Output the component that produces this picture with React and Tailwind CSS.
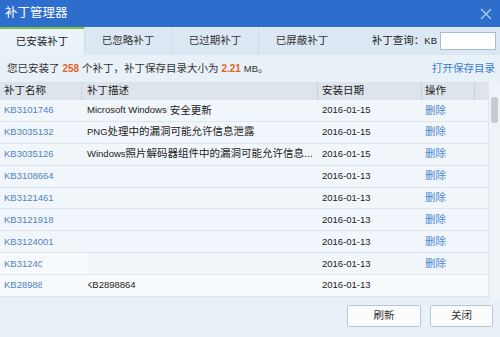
import React from "react";

const cjk = { fontFamily: '"Liberation Sans", "Noto Sans CJK SC", sans-serif' };

const rows = [
  { id: "KB3101746", desc: [["en", "Microsoft Windows"], ["zh", "安全更新", true]], date: "2016-01-15" },
  { id: "KB3035132", desc: [["en", "PNG"], ["zh", "处理中的漏洞可能允许信息泄露"]], date: "2016-01-15" },
  { id: "KB3035126", desc: [["en", "Windows"], ["zh", "照片解码器组件中的漏洞可能允许信息..."]], date: "2016-01-15" },
  { id: "KB3108664", desc: [], date: "2016-01-13" },
  { id: "KB3121461", desc: [], date: "2016-01-13" },
  { id: "KB3121918", desc: [], date: "2016-01-13" },
  { id: "KB3124001", desc: [], date: "2016-01-13" },
  { id: "KB3124001", desc: [], date: "2016-01-13", clip: true },
  { id: "KB2898864", desc: [["en", "KB2898864"]], date: "2016-01-13", clip: true, last: true },
];

const Desc = ({ parts }) =>
  parts.map(([lang, text, gap], i) => (
    <span key={i} className={`${lang === "en" ? "text-[9.5px]" : "text-[10.5px]"} ${gap ? "ml-[3px]" : ""}`}>
      {text}
    </span>
  ));

const App = () => {
  return (
    <div className="w-[500px] h-[337px] bg-[#e8f1f8] flex flex-col overflow-hidden text-[#222]" style={cjk}>
      {/* title bar */}
      <div className="h-[27px] bg-[#2d6dcc] flex items-center justify-between px-[5px] shrink-0">
        <span className="text-white text-[12.5px]">补丁管理器</span>
        <svg width="12" height="12" viewBox="0 0 12 12" className="mr-[3px]">
          <path d="M1 1L11 11M11 1L1 11" stroke="#b9d2f2" strokeWidth="1.2" />
        </svg>
      </div>

      {/* tabs */}
      <div className="h-[28px] bg-[#dbe7f3] flex items-stretch shrink-0">
        <div className="w-[84px] bg-[#eaf3fa] border-t-2 border-[#7cc242] flex items-center justify-center text-[10.5px]">
          已安装补丁
        </div>
        {["已忽略补丁", "已过期补丁", "已屏蔽补丁"].map((t) => (
          <div key={t} className="w-[87px] border-l border-[#cfdbe7] flex items-center justify-center text-[10.5px] text-[#333]">
            {t}
          </div>
        ))}
        <div className="flex-1 flex items-center justify-end pr-[4px] gap-[2px]">
          <span className="text-[10.5px]">补丁查询：</span>
          <span className="text-[9.5px] -ml-[2px]">KB</span>
          <div className="w-[56px] h-[18px] bg-white border border-[#a9bdd1] ml-[1px]" />
        </div>
      </div>

      {/* info line */}
      <div className="h-[27px] flex items-center justify-between px-[7px] shrink-0">
        <div className="text-[10.5px] text-[#333]">
          您已安装了 <span className="text-[#e7622a] text-[10px] font-bold">258</span> 个补丁，补丁保存目录大小为{" "}
          <span className="text-[#e7622a] text-[10px] font-bold">2.21</span> <span className="text-[9.5px]">MB</span>。
        </div>
        <span className="text-[10.5px] text-[#3b7bcc] mr-[-2px]">打开保存目录</span>
      </div>

      {/* table */}
      <div className="flex h-[218px] shrink-0">
        <div className="flex-1 flex flex-col">
          <div className="h-[18px] bg-[#dde4eb] flex text-[10.5px] shrink-0">
            <div className="w-[82px] pl-[4px] flex items-center border-r border-[#c9d1d9]">补丁名称</div>
            <div className="w-[236px] pl-[5px] flex items-center border-r border-[#c9d1d9]">补丁描述</div>
            <div className="w-[104px] pl-[4px] flex items-center border-r border-[#c9d1d9]">安装日期</div>
            <div className="w-[53px] pl-[3px] flex items-center border-r border-[#c9d1d9]">操作</div>
            <div className="flex-1" />
          </div>
          {rows.map((r, i) => (
            <div key={i} className="h-[21.9px] flex border-b border-[#dde6ee] bg-[#f1f6fb] shrink-0">
              <div className={`w-[82px] pl-[4px] flex items-center ${r.clip ? "bg-[#f6fafd] w-[88px]" : ""}`}>
                <span className={`text-[9.5px] text-[#5182c0] whitespace-nowrap overflow-hidden ${r.clip ? "w-[38px]" : ""}`}>{r.id}</span>
              </div>
              <div className={`${r.clip ? "w-[230px] pl-0" : "w-[236px] pl-[5px]"} flex items-center whitespace-nowrap overflow-hidden ${r.last ? "bg-[#f8fbfd]" : ""}`}>
                {r.last ? (
                  <span className="text-[9.5px] -ml-[2px]">KB2898864</span>
                ) : (
                  <Desc parts={r.desc} />
                )}
              </div>
              <div className={`w-[104px] pl-[4px] flex items-center text-[9.5px] ${r.last ? "bg-[#f8fbfd]" : ""}`}>{r.date}</div>
              <div className={`w-[53px] pl-[3px] flex items-center text-[10.5px] text-[#4d86d2] ${r.last ? "bg-[#f8fbfd]" : ""}`}>
                {r.last ? "" : "删除"}
              </div>
              <div className={`flex-1 ${r.last ? "bg-[#f8fbfd]" : ""}`} />
            </div>
          ))}
        </div>
        {/* scrollbar */}
        <div className="w-[12px] bg-[#eef3f7] border-l border-[#dfe6ec] flex flex-col items-center pt-[15px]">
          <div className="w-[7px] h-[26px] rounded-[3px] bg-[#c6cbd0]" />
        </div>
      </div>

      {/* buttons */}
      <div className="flex justify-end gap-[9px] pr-[7px] pt-[5px]">
        <button className="w-[74px] h-[22px] bg-[#fbfcfd] border border-[#bcc6d0] rounded-[2px] text-[10.5px] text-[#333]">刷新</button>
        <button className="w-[63px] h-[22px] bg-[#fbfcfd] border border-[#bcc6d0] rounded-[2px] text-[10.5px] text-[#333]">关闭</button>
      </div>
    </div>
  );
};

export default App;
